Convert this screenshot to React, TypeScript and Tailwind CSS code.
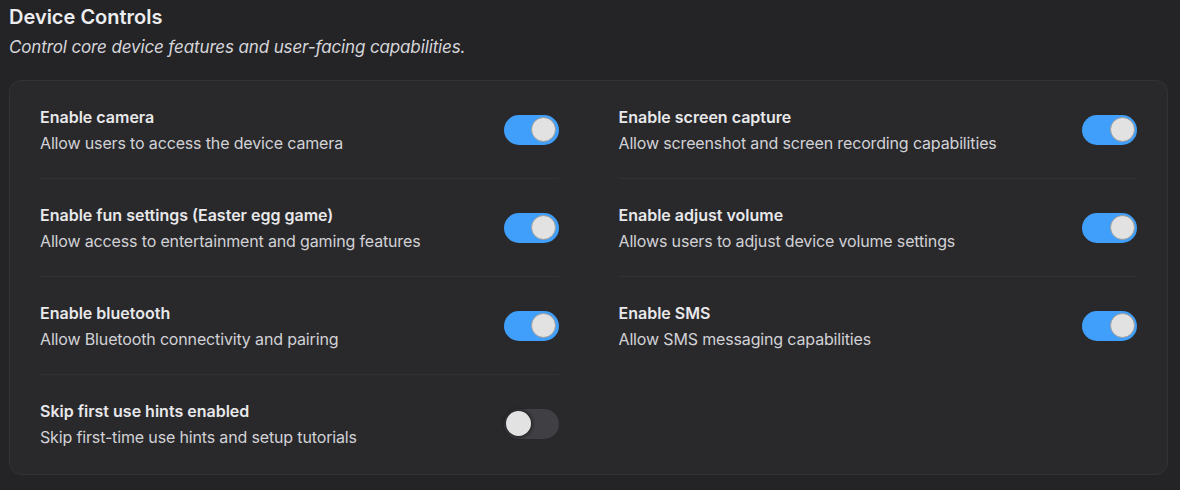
import { useState } from 'react'

type Setting = {
	id: string
	label: string
	description: string
	enabled: boolean
}

const leftSettings: Setting[] = [
	{ id: 'camera', label: 'Enable camera', description: 'Allow users to access the device camera', enabled: true },
	{ id: 'fun', label: 'Enable fun settings (Easter egg game)', description: 'Allow access to entertainment and gaming features', enabled: true },
	{ id: 'bluetooth', label: 'Enable bluetooth', description: 'Allow Bluetooth connectivity and pairing', enabled: true },
	{ id: 'hints', label: 'Skip first use hints enabled', description: 'Skip first-time use hints and setup tutorials', enabled: false },
]

const rightSettings: Setting[] = [
	{ id: 'capture', label: 'Enable screen capture', description: 'Allow screenshot and screen recording capabilities', enabled: true },
	{ id: 'volume', label: 'Enable adjust volume', description: 'Allows users to adjust device volume settings', enabled: true },
	{ id: 'sms', label: 'Enable SMS', description: 'Allow SMS messaging capabilities', enabled: true },
]

const Toggle = ({ checked, onChange }: { checked: boolean; onChange: () => void }) => (
	<button
		type="button"
		role="switch"
		aria-checked={checked}
		onClick={onChange}
		className={`flex h-[30px] w-[55px] shrink-0 items-center rounded-full p-[2.5px] ${
			checked ? 'bg-[#3f9ffb]' : 'bg-[#3f3f44]'
		}`}
	>
		<span
			className={`block h-[25px] w-[25px] rounded-full bg-[#e2e2e2] transition-transform ${
				checked
					? 'translate-x-[25px] border border-[#9c9c9c]'
					: 'translate-x-0 shadow-[0_0_3px_2px_rgba(0,0,0,0.35)]'
			}`}
		/>
	</button>
)

const SettingRow = ({ setting, onToggle }: { setting: Setting; onToggle: () => void }) => (
	<div className="flex items-center justify-between py-[24.5px]">
		<div className="flex flex-col gap-[4px]">
			<div className="text-[16px] font-semibold leading-[22px] text-[#e8e8ea]">{setting.label}</div>
			<div className="text-[16px] leading-[22px] tracking-[-0.15px] text-[#d2d2d6]">{setting.description}</div>
		</div>
		<Toggle checked={setting.enabled} onChange={onToggle} />
	</div>
)

const Column = ({ initial }: { initial: Setting[] }) => {
	const [items, setItems] = useState(initial)

	const toggle = (id: string) => {
		setItems(prev => prev.map(s => (s.id === id ? { ...s, enabled: !s.enabled } : s)))
	}

	return (
		<div className="flex flex-col divide-y divide-[#313135]">
			{items.map(s => (
				<SettingRow key={s.id} setting={s} onToggle={() => toggle(s.id)} />
			))}
		</div>
	)
}

export default function App() {
	return (
		<div
			className="min-h-[490px] w-full bg-[#242427] pl-[9px] pr-[12px] pt-[3px]"
			style={{ fontFamily: 'Inter, "Noto Sans", sans-serif' }}
		>
			<h2 className="text-[20px] font-semibold leading-[28px] text-[#ededef]">Device Controls</h2>
			<p className="mt-[5px] text-[17px] italic leading-[22px] tracking-[-0.13px] text-[#d6d6da]">
				Control core device features and user-facing capabilities.
			</p>

			<div className="mt-[22px] rounded-xl border border-[#333337] bg-[#29292c] px-[30px] pb-[2px]">
				<div className="grid grid-cols-2 gap-x-[60px]">
					<Column initial={leftSettings} />
					<Column initial={rightSettings} />
				</div>
			</div>
		</div>
	)
}
